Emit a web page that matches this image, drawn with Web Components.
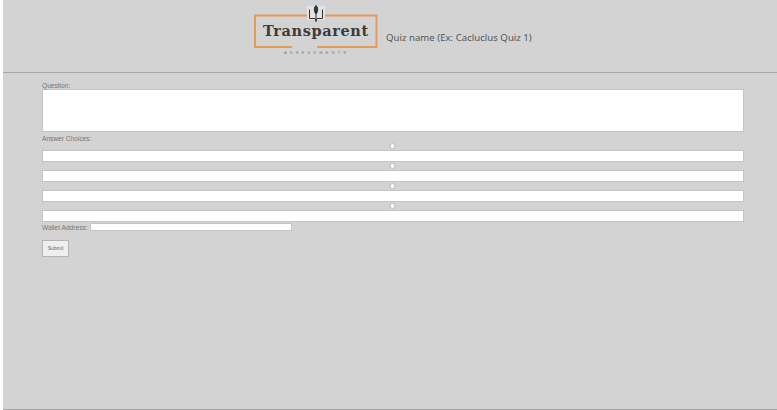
<!DOCTYPE html>
<html>
<head>
<meta charset="utf-8">
<title>Transparent Assessments</title>
<style>
html, body { margin: 0; height: 100%; background: #fff; }
body { font-family: "Liberation Sans", sans-serif; overflow: hidden; }
</style>
</head>
<body>
<quiz-page>
  <quiz-header slot="header" name="Quiz name (Ex: Cacluclus Quiz 1)"></quiz-header>
  <quiz-form></quiz-form>
</quiz-page>
<script>
class QuizPage extends HTMLElement {
    constructor() {
        super();
        this.attachShadow({ mode: 'open' });
        this.shadowRoot.innerHTML = `<style>
:host { display: block; height: 409px; margin-left: 3px; background: #d3d3d3; border-bottom: 1px solid #a9a9a9; }
</style>
<slot name="header"></slot>
<slot></slot>`;
    }
}

class TaLogo extends HTMLElement {
    constructor() {
        super();
        this.attachShadow({ mode: 'open' });
        this.shadowRoot.innerHTML = `<style>
:host { display: block; position: relative; width: 124px; height: 58px; }
svg { position: absolute; left: 0; top: 0; }
.name { position: absolute; left: 9px; top: 21px; font: bold 14.500px/20px "DejaVu Serif", serif; letter-spacing: .6px; color: #3b3b3b; white-space: nowrap; }
.sub { position: absolute; left: 30px; top: 50px; font: 4px/6px "Liberation Sans", sans-serif; letter-spacing: 3.2px; color: #777; white-space: nowrap; }
</style>
<svg width="124" height="58" viewBox="0 0 124 58" fill="none">
  <path d="M53 15.500H1V47H38M63 47H122.500V15.500H71" stroke="#e59a58" stroke-width="2"/>
  <rect x="53" y="6" width="18" height="14" fill="#e4e4e4"/>
  <g stroke="#333" stroke-width="1" fill="none">
    <path d="M55.500 9.500V18.500H61L62 21L63 18.500H68.500V9.500"/>
    <path d="M62 6V22"/>
    <path d="M60.500 7.500C60 10 60.500 12.500 62 14C63.500 12.500 64 10 63.500 7.500L62 5.500Z" fill="#333"/>
  </g>
</svg>
<span class="name">Transparent</span>
<span class="sub">ASSESSMENTS</span>`;
    }
}

class QuizHeader extends HTMLElement {
    constructor() {
        super();
        this.attachShadow({ mode: 'open' });
        this.shadowRoot.innerHTML = `<style>
:host { display: flex; height: 72px; border-bottom: 1px solid #a6a6a6; padding-left: 251px; }
.name { margin: 30px 0 0 8px; font: 9.650px/15px "Noto Sans", sans-serif; color: #555; white-space: nowrap; }
</style>
<ta-logo></ta-logo>
<div class="name"></div>`;
        this.shadowRoot.querySelector('.name').textContent = this.getAttribute('name');
    }
}

class AnswerChoice extends HTMLElement {
    constructor() {
        super();
        this.attachShadow({ mode: 'open' });
        this.shadowRoot.innerHTML = `<style>
:host { display: block; }
.dot { display: block; width: 6px; height: 6px; margin: 0 auto; border-radius: 50%; background: #fff; border: .5px solid #bbb; box-sizing: border-box; transform: translateX(-.5px); }
.radio-row { height: 8px; display: flex; align-items: center; }
.box { display: block; height: 12px; box-sizing: border-box; background: #fff; border: 1px solid #c4c4c4; }
</style>
<div class="radio-row"><span class="dot"></span></div>
<div class="box"></div>`;
    }
}

class QuizForm extends HTMLElement {
    constructor() {
        super();
        this.attachShadow({ mode: 'open' });
        this.shadowRoot.innerHTML = `<style>
:host { display: block; padding: 9px 33px 0 39px; color: #767676; font: 6.600px/7px "Liberation Sans", sans-serif; }
.question { height: 43px; box-sizing: border-box; background: #fff; border: 1px solid #c4c4c4; }
.lbl { height: 7px; }
.answers-lbl { margin-top: 3px; }
.answers { display: grid; }
.wallet { display: flex; align-items: center; column-gap: 2px; height: 8px; margin-top: 1px; }
.wallet .field { width: 202px; height: 8px; box-sizing: border-box; background: #fff; border: 1px solid #c4c4c4; }
.submit { display: flex; align-items: center; justify-content: center; width: 27px; height: 17px; box-sizing: border-box; margin-top: 9px; background: #efefef; border: 1px solid #b5b5b5; font-size: 5px; color: #666; }
</style>
<div class="lbl">Question:</div>
<div class="question"></div>
<div class="lbl answers-lbl">Answer Choices:</div>
<div class="answers">
  <answer-choice></answer-choice>
  <answer-choice></answer-choice>
  <answer-choice></answer-choice>
  <answer-choice></answer-choice>
</div>
<div class="wallet"><span>Wallet Address:</span><div class="field"></div></div>
<div class="submit">Submit</div>`;
    }
}

customElements.define('ta-logo', TaLogo);
customElements.define('quiz-page', QuizPage);
customElements.define('quiz-header', QuizHeader);
customElements.define('answer-choice', AnswerChoice);
customElements.define('quiz-form', QuizForm);
</script>
</body>
</html>
